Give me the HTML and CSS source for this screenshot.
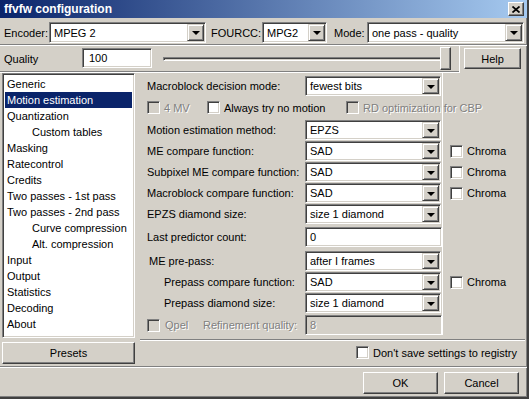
FILE: index.html
```html
<!DOCTYPE html>
<html>
<head>
    <title>ffvfw configuration</title>
    <link rel="stylesheet" href="styles.css">
</head>
<body>
<div class="window">
    <div class="titlebar">
        <span class="title">ffvfw configuration</span>
        <span class="close-btn">
            <svg width="8" height="7" viewBox="0 0 8 7"><path d="M0.5 0.5 L7.5 6.5 M7.5 0.5 L0.5 6.5" stroke="#000" stroke-width="1.7" fill="none"/></svg>
        </span>
    </div>

    <!-- Encoder / FOURCC / Mode -->
    <div class="toprow">
        <span class="lbl enc-lbl">Encoder:</span>
        <div class="combo encoder"><span class="value">MPEG 2</span><span class="drop"></span></div>
        <span class="lbl fourcc-lbl">FOURCC:</span>
        <div class="combo fourcc"><span class="value">MPG2</span><span class="drop"></span></div>
        <span class="lbl mode-lbl">Mode:</span>
        <div class="combo mode"><span class="value">one pass - quality</span><span class="drop"></span></div>
    </div>
    <div class="etched"></div>

    <!-- Quality -->
    <div class="quality-row">
        <div class="quality-frame">
            <span class="lbl quality-lbl">Quality</span>
            <div class="edit quality-edit">100</div>
            <div class="slider">
                <div class="track"></div>
                <div class="thumb"></div>
            </div>
        </div>
        <div class="button help">Help</div>
    </div>

    <div class="main">
        <div class="sidebar">
            <ul class="pagelist">
                <li>Generic</li>
                <li class="selected">Motion estimation</li>
                <li>Quantization</li>
                <li class="sub">Custom tables</li>
                <li>Masking</li>
                <li>Ratecontrol</li>
                <li>Credits</li>
                <li>Two passes - 1st pass</li>
                <li>Two passes - 2nd pass</li>
                <li class="sub">Curve compression</li>
                <li class="sub">Alt. compression</li>
                <li>Input</li>
                <li>Output</li>
                <li>Statistics</li>
                <li>Decoding</li>
                <li>About</li>
            </ul>
            <div class="button presets">Presets</div>
        </div>

        <div class="content">
            <div class="page">
                <span class="flabel">Macroblock decision mode:</span>
                <div class="combo field"><span class="value">fewest bits</span><span class="drop"></span></div>

                <div class="check-row">
                    <label class="check-item mv4 disabled"><span class="checkbox"></span>4 MV</label>
                    <label class="check-item nomotion"><span class="checkbox"></span>Always try no motion</label>
                    <label class="check-item disabled"><span class="checkbox"></span>RD optimization for CBP</label>
                </div>

                <span class="flabel">Motion estimation method:</span>
                <div class="combo field"><span class="value">EPZS</span><span class="drop"></span></div>

                <span class="flabel">ME compare function:</span>
                <div class="combo field"><span class="value">SAD</span><span class="drop"></span></div>
                <label class="check-item chroma"><span class="checkbox"></span>Chroma</label>

                <span class="flabel">Subpixel ME compare function:</span>
                <div class="combo field"><span class="value">SAD</span><span class="drop"></span></div>
                <label class="check-item chroma"><span class="checkbox"></span>Chroma</label>

                <span class="flabel">Macroblock compare function:</span>
                <div class="combo field"><span class="value">SAD</span><span class="drop"></span></div>
                <label class="check-item chroma"><span class="checkbox"></span>Chroma</label>

                <span class="flabel">EPZS diamond size:</span>
                <div class="combo field"><span class="value">size 1 diamond</span><span class="drop"></span></div>

                <span class="flabel edit-label">Last predictor count:</span>
                <div class="edit field-edit">0</div>

                <span class="flabel indent1">ME pre-pass:</span>
                <div class="combo field"><span class="value">after I frames</span><span class="drop"></span></div>

                <span class="flabel indent2">Prepass compare function:</span>
                <div class="combo field"><span class="value">SAD</span><span class="drop"></span></div>
                <label class="check-item chroma"><span class="checkbox"></span>Chroma</label>

                <span class="flabel indent2">Prepass diamond size:</span>
                <div class="combo field"><span class="value">size 1 diamond</span><span class="drop"></span></div>

                <div class="qpel-row">
                    <label class="check-item qpel disabled"><span class="checkbox"></span>Qpel</label>
                    <span class="disabled-text">Refinement quality:</span>
                </div>
                <div class="edit field-edit qpel-edit">8</div>
            </div>

            <div class="etched"></div>
            <div class="registry-row">
                <label class="check-item"><span class="checkbox"></span>Don't save settings to registry</label>
            </div>
        </div>
    </div>

    <div class="etched"></div>
    <div class="buttons">
        <div class="button dlg-btn">OK</div>
        <div class="button dlg-btn">Cancel</div>
    </div>
</div>
</body>
</html>
```

FILE: styles.css
```css
body {
    margin: 0;
    padding: 0;
    background: #d4d0c8;
    font-family: "Liberation Sans", Arial, sans-serif;
    font-size: 11px;
    color: #000;
    overflow: hidden;
}

.window {
    width: 529px;
    height: 399px;
    box-sizing: border-box;
    border-right: 2px solid #404040;
    border-bottom: 2px solid #404040;
    box-shadow: inset -1px -1px #808080;
    display: flex;
    flex-direction: column;
}

/* title bar */
.titlebar {
    height: 18px;
    background: linear-gradient(to right, #0a246a, #a6caf0);
    display: flex;
    align-items: center;
    justify-content: space-between;
    padding: 0 3px 0 4px;
}

.title {
    color: #fff;
    font-weight: bold;
    font-size: 12px;
}

.close-btn {
    width: 16px;
    height: 14px;
    box-sizing: border-box;
    background: #d4d0c8;
    border: 1px solid;
    border-color: #fff #404040 #404040 #fff;
    box-shadow: inset -1px -1px #808080;
    display: flex;
    align-items: center;
    justify-content: center;
}

/* generic controls */
.lbl {
    white-space: nowrap;
}

.combo {
    height: 21px;
    box-sizing: border-box;
    background: #fff;
    border: 1px solid;
    border-color: #808080 #fff #fff #808080;
    box-shadow: inset 1px 1px #404040, inset -1px -1px #d4d0c8;
    display: flex;
    align-items: center;
    padding: 1px;
}

.combo .value {
    flex-grow: 1;
    padding-left: 3px;
    white-space: nowrap;
    overflow: hidden;
}

.drop {
    width: 17px;
    height: 17px;
    box-sizing: border-box;
    background: #d4d0c8;
    border: 1px solid;
    border-color: #d4d0c8 #404040 #404040 #d4d0c8;
    box-shadow: inset 1px 1px #fff, inset -1px -1px #808080;
    flex-shrink: 0;
    display: flex;
    align-items: center;
    justify-content: center;
}

.drop::after {
    content: "";
    border-left: 4px solid transparent;
    border-right: 4px solid transparent;
    border-top: 4px solid #000;
    margin-top: 1px;
}

.edit {
    height: 20px;
    box-sizing: border-box;
    background: #fff;
    border: 1px solid;
    border-color: #808080 #fff #fff #808080;
    box-shadow: inset 1px 1px #404040, inset -1px -1px #d4d0c8;
    padding: 0 4px;
    line-height: 18px;
}

.button {
    box-sizing: border-box;
    background: #d4d0c8;
    border: 1px solid;
    border-color: #fff #404040 #404040 #fff;
    box-shadow: inset -1px -1px #808080;
    display: flex;
    align-items: center;
    justify-content: center;
}

.etched {
    height: 1px;
    border-top: 1px solid #808080;
    background: #fff;
    flex-shrink: 0;
}

.checkbox {
    width: 13px;
    height: 13px;
    box-sizing: border-box;
    background: #fff;
    border: 1px solid;
    border-color: #808080 #fff #fff #808080;
    box-shadow: inset 1px 1px #404040, inset -1px -1px #d4d0c8;
    margin-right: 4px;
    flex-shrink: 0;
}

.check-item {
    display: flex;
    align-items: center;
    white-space: nowrap;
}

.disabled,
.disabled-text {
    color: #808080;
    text-shadow: 1px 1px 0 #fff;
}

.disabled .checkbox {
    background: #d4d0c8;
}

/* top row */
.toprow {
    display: flex;
    align-items: center;
    margin-top: 4px;
    height: 21px;
}

.enc-lbl {
    margin-left: 4px;
    width: 45px;
}

.encoder {
    width: 157px;
}

.fourcc-lbl {
    margin-left: 5px;
    width: 51px;
}

.fourcc {
    width: 65px;
}

.mode-lbl {
    margin-left: 7px;
    width: 33px;
}

.mode {
    width: 157px;
}

.toprow + .etched {
    margin-top: 1px;
}

/* quality row */
.quality-row {
    display: flex;
    align-items: flex-start;
    height: 27px;
}

.quality-frame {
    width: 460px;
    height: 27px;
    box-sizing: border-box;
    border-right: 1px solid #fff;
    border-bottom: 1px solid #fff;
    box-shadow: inset 0 -1px #808080;
    display: flex;
    align-items: center;
}

.quality-lbl {
    margin-left: 4px;
    width: 78px;
    margin-top: -1px;
}

.quality-edit {
    width: 70px;
    margin-top: -3px;
    padding-left: 6px;
}

.slider {
    position: relative;
    margin-left: 11px;
    width: 283px;
    height: 26px;
}

.track {
    position: absolute;
    left: 0;
    right: 0;
    top: 11px;
    height: 4px;
    box-sizing: border-box;
    border: 1px solid;
    border-color: #808080 #fff #fff #808080;
    box-shadow: inset 1px 1px #404040;
}

.thumb {
    position: absolute;
    right: -5px;
    top: 1px;
    width: 11px;
    height: 23px;
    box-sizing: border-box;
    background: #d4d0c8;
    border: 1px solid;
    border-color: #fff #404040 #404040 #fff;
    box-shadow: inset -1px -1px #808080;
}

.help {
    width: 57px;
    height: 21px;
    margin: 2px 0 0 4px;
}

/* main area */
.main {
    display: flex;
    height: 292px;
}

.sidebar {
    margin-left: 2px;
    width: 133px;
    display: flex;
    flex-direction: column;
}

.pagelist {
    list-style: none;
    margin: 0;
    height: 265px;
    box-sizing: border-box;
    background: #fff;
    border: 1px solid;
    border-color: #808080 #fff #fff #808080;
    box-shadow: inset 1px 1px #404040, inset -1px -1px #d4d0c8;
    padding: 2px 2px 0 2px;
}

.pagelist li {
    height: 16px;
    line-height: 16px;
    padding-left: 2px;
    white-space: nowrap;
}

.pagelist li.sub {
    padding-left: 27px;
}

.pagelist li.selected {
    background: #0a246a;
    color: #fff;
}

.presets {
    height: 22px;
    margin-top: 4px;
}

.content {
    margin-left: 6px;
    width: 384px;
    display: flex;
    flex-direction: column;
}

.page {
    height: 262px;
    box-sizing: border-box;
    padding: 3px 0 0 6px;
    border-right: 1px solid #fff;
    width: 302px;
    display: grid;
    grid-template-columns: 158px 137px 8px 80px;
    grid-template-rows: 21px 23px 21px 21px 21px 21px 21px 26px 21px 21px 21px 21px;
    align-items: start;
}

.flabel {
    grid-column: 1;
    line-height: 20px;
    white-space: nowrap;
}

.indent1 {
    padding-left: 2px;
}

.indent2 {
    padding-left: 17px;
}

.edit-label {
    margin-top: 2px;
}

.field {
    grid-column: 2;
    width: 136px;
    height: 20px;
}

.field .drop {
    height: 16px;
}

.field-edit {
    grid-column: 2;
    width: 137px;
    margin-top: 2px;
}

.chroma {
    grid-column: 4;
    height: 20px;
}

.check-row {
    grid-column: 1 / 5;
    height: 23px;
    display: flex;
    align-items: center;
    margin-top: -1px;
}

.mv4 {
    width: 60px;
}

.nomotion {
    width: 139px;
}

.qpel-row {
    grid-column: 1;
    display: flex;
    align-items: center;
    height: 20px;
    margin-top: 1px;
}

.qpel {
    width: 56px;
}

.qpel .checkbox {
    margin-right: 5px;
}

.qpel-edit {
    margin-top: 1px;
    background: #d4d0c8;
    color: #808080;
    text-shadow: 1px 1px 0 #fff;
}

.content .etched {
    margin-top: 4px;
    margin-left: -1px;
}

.registry-row {
    display: flex;
    justify-content: flex-end;
    align-items: center;
    height: 23px;
    padding-right: 8px;
}

.main + .etched {
    margin-top: 1px;
}

.buttons {
    display: flex;
    justify-content: flex-end;
    gap: 6px;
    margin-top: 4px;
    padding-right: 8px;
}

.dlg-btn {
    width: 75px;
    height: 22px;
}
```
